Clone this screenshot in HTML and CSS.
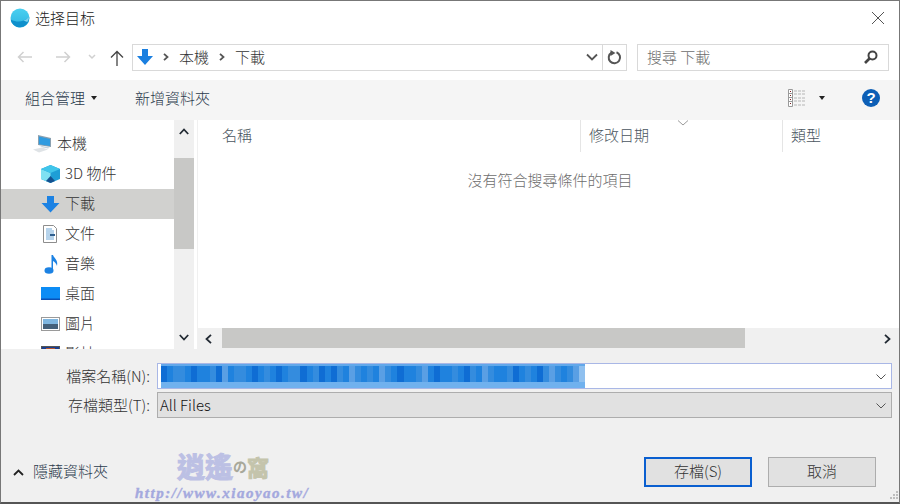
FILE: index.html
```html
<!DOCTYPE html>
<html lang="zh-Hant">
<head>
    <meta charset="UTF-8">
    <meta name="viewport" content="width=device-width, initial-scale=1.0">
    <title>选择目标</title>
    <link rel="stylesheet" href="styles.css">
</head>
<body>
    <div class="window">
        <header class="titlebar">
            <svg class="app-icon" width="20" height="20" viewBox="0 0 20 20">
                <defs>
                    <linearGradient id="ball" x1="0" y1="0" x2="0" y2="1">
                        <stop offset="0" stop-color="#4ad0f0"/>
                        <stop offset="1" stop-color="#2fb4e2"/>
                    </linearGradient>
                </defs>
                <circle cx="10" cy="10" r="9.5" fill="url(#ball)"/>
                <path d="M.7 11.500c5 2.500 9 2.500 13 1 2-.8 4-2 5.500-3.500.3 5.500-4 10.300-9.200 10.300-4.800 0-8.800-3.500-9.300-7.800z" fill="#0f90cc"/>
                <path d="M13.500 12.500c2-.5 4-2 5.500-3.500 0 2-.7 3.500-1.700 5z" fill="#7fd4ef"/>
            </svg>
            <span class="title-text">选择目标</span>
            <svg class="close-icon" width="14" height="14" viewBox="0 0 14 14">
                <path d="M1 1l12 12M13 1L1 13" stroke="#555" stroke-width="1" fill="none"/>
            </svg>
        </header>

        <nav class="navbar">
            <svg class="nav-back" width="16" height="12" viewBox="0 0 16 12">
                <path d="M15 6H1.500M6.500 1l-5 5 5 5" stroke="#d0d0d0" stroke-width="1.500" fill="none"/>
            </svg>
            <svg class="nav-forward" width="16" height="12" viewBox="0 0 16 12">
                <path d="M1 6h13.500M9.500 1l5 5-5 5" stroke="#d0d0d0" stroke-width="1.500" fill="none"/>
            </svg>
            <svg class="nav-recent" width="8" height="6" viewBox="0 0 8 6">
                <path d="M1 1l3 3 3-3" stroke="#d0d0d0" stroke-width="1.500" fill="none"/>
            </svg>
            <svg class="nav-up" width="14" height="16" viewBox="0 0 14 16">
                <path d="M7 16V1.500M1 7.500l6-6 6 6" stroke="#444" stroke-width="1.300" fill="none"/>
            </svg>
            <div class="address">
                <svg class="address-icon" width="16" height="18" viewBox="0 0 16 18">
                    <path d="M5 1h6v7h5l-8 9-8-9h5z" fill="#1a7fe0"/>
                </svg>
                <svg class="crumb-sep" width="6" height="8" viewBox="0 0 6 8">
                    <path d="M1 .8L4.500 4 1 7.200" stroke="#555" stroke-width="1.800" fill="none"/>
                </svg>
                <span class="crumb">本機</span>
                <svg class="crumb-sep" width="6" height="8" viewBox="0 0 6 8">
                    <path d="M1 .8L4.500 4 1 7.200" stroke="#555" stroke-width="1.800" fill="none"/>
                </svg>
                <span class="crumb">下載</span>
                <svg class="address-drop" width="12" height="8" viewBox="0 0 12 8">
                    <path d="M1 1.500l5 5 5-5" stroke="#555" stroke-width="1.800" fill="none"/>
                </svg>
                <span class="address-refresh">
                    <svg width="15" height="15" viewBox="0 0 15 15">
                        <path d="M9.500 2.300a5.700 5.700 0 1 1-5 .4" stroke="#555" stroke-width="2" fill="none"/>
                        <path d="M3.500 0v6L8.500 3z" fill="#555"/>
                    </svg>
                </span>
            </div>
            <div class="search">
                <span class="search-text">搜尋 下載</span>
                <svg width="14" height="14" viewBox="0 0 14 14">
                    <circle cx="8.500" cy="5.500" r="4" stroke="#444" stroke-width="2" fill="none"/>
                    <path d="M5.500 8.500L1 13" stroke="#444" stroke-width="2.600"/>
                </svg>
            </div>
        </nav>

        <div class="toolbar">
            <span class="tool">組合管理</span>
            <span class="caret"></span>
            <span class="tool tool-new">新增資料夾</span>
            <svg class="view-icon" width="18" height="18" viewBox="0 0 18 18">
                <path d="M.5.500h4v17h-4zM.5 4.500h4M.5 8.500h4M.5 12.500h4" stroke="#9a9a9a" fill="#fff"/>
                <path d="M6 2h12M6 5h12M6 9h12M6 12h12M6 16h12" stroke="#b5b5b5" stroke-dasharray="3 1"/>
                <path d="M2 2h1v1H2zM2 6h1v1H2zM2 10h1v1H2zM2 14h1v1H2z" fill="#7a2020"/>
            </svg>
            <span class="caret caret-view"></span>
            <span class="help">?</span>
        </div>

        <div class="browser">
            <aside class="sidebar">
                <ul class="tree">
                    <li class="tree-row tree-root">
                        <svg width="20" height="18" viewBox="0 0 20 18">
                            <path d="M6 0l13 3v9L6 10z" fill="#8aa0b0"/>
                            <path d="M7 1.500l11 2.500v7L7 9.300z" fill="#2f9be0"/>
                            <path d="M7 10.500l11 2-2 1-5-1z" fill="#c7d3dc"/>
                            <path d="M1 14.500l9-2 6 2-9 3z" fill="#dfe3e6"/>
                        </svg>
                        <span>本機</span>
                    </li>
                    <li class="tree-row">
                        <svg width="19" height="18" viewBox="0 0 19 18">
                            <path d="M9.500 0L19 4v10l-9.500 4L0 14V4z" fill="#1e9ed6"/>
                            <path d="M0 4l9.500 4v10L0 14z" fill="#7fe0f2"/>
                            <path d="M9.500 0L19 4 9.500 8 0 4z" fill="#40c5ea"/>
                            <path d="M5 16l4.500-5 4.500 5-4.500 2z" fill="#14508f"/>
                        </svg>
                        <span>3D 物件</span>
                    </li>
                    <li class="tree-row tree-selected">
                        <svg width="19" height="18" viewBox="0 0 19 18">
                            <path d="M6 1h7v7h5.500l-9 9.500-9-9.500H6z" fill="#1c82e3"/>
                        </svg>
                        <span>下載</span>
                    </li>
                    <li class="tree-row">
                        <svg width="19" height="18" viewBox="0 0 19 18">
                            <path d="M2.500.500h10l3 3v14h-13z" fill="#fff" stroke="#8d8d8d"/>
                            <path d="M5 4h6M5 6h8M5 8h8M5 10h8M5 12h8M5 14h8" stroke="#6fa8d8"/>
                            <path d="M9 9h5v2H9z" fill="#2f5f8f"/>
                        </svg>
                        <span>文件</span>
                    </li>
                    <li class="tree-row">
                        <svg width="19" height="19" viewBox="0 0 19 19">
                            <ellipse cx="8" cy="15.500" rx="4.500" ry="3.200" fill="#1c82e3"/>
                            <path d="M10.500 0h1.500c.5 3 5.500 4.500 4 11-.3-2-2.500-4.500-4-5V16h-1.500z" fill="#1c82e3"/>
                        </svg>
                        <span>音樂</span>
                    </li>
                    <li class="tree-row">
                        <svg width="19" height="18" viewBox="0 0 19 18">
                            <rect y="2" width="19" height="13" fill="#0c8cf5"/>
                            <rect y="13.500" width="19" height="1.500" fill="#0a4fb5"/>
                        </svg>
                        <span>桌面</span>
                    </li>
                    <li class="tree-row">
                        <svg width="19" height="18" viewBox="0 0 19 18">
                            <rect x=".5" y="2.500" width="18" height="13" fill="#fff" stroke="#9a9a9a"/>
                            <rect x="2" y="4" width="15" height="5" fill="#7fb6e0"/>
                            <rect x="2" y="9" width="15" height="5" fill="#44607a"/>
                        </svg>
                        <span>圖片</span>
                    </li>
                    <li class="tree-row">
                        <svg width="19" height="18" viewBox="0 0 19 18">
                            <rect x=".5" y="1.500" width="18" height="13" fill="#1a3f8f" stroke="#555"/>
                            <rect x="5" y="3" width="9" height="8" fill="#b5532a"/>
                        </svg>
                        <span>影片</span>
                    </li>
                </ul>
                <div class="v-scroll">
                    <svg class="arrow" width="10" height="7" viewBox="0 0 10 7">
                        <path d="M.8 6L5 1.500 9.200 6" stroke="#222a33" stroke-width="1.800" fill="none"/>
                    </svg>
                    <div class="v-track"><div class="v-thumb"></div></div>
                    <svg class="arrow" width="10" height="7" viewBox="0 0 10 7">
                        <path d="M.8 1L5 5.500 9.200 1" stroke="#222a33" stroke-width="1.800" fill="none"/>
                    </svg>
                </div>
            </aside>

            <main class="files">
                <div class="columns">
                    <div class="col col-name">名稱</div>
                    <div class="col col-date">修改日期
                        <svg class="sort-mark" width="12" height="6" viewBox="0 0 12 6">
                            <path d="M1 .5l5 4.500 5-4.500" stroke="#9a9a9a" fill="none"/>
                        </svg>
                    </div>
                    <div class="col col-type">類型</div>
                </div>
                <p class="empty">沒有符合搜尋條件的項目</p>
                <div class="h-scroll">
                    <svg width="7" height="10" viewBox="0 0 7 10">
                        <path d="M6 .8L1.500 5 6 9.200" stroke="#222a33" stroke-width="1.800" fill="none"/>
                    </svg>
                    <div class="h-track"><div class="h-thumb"></div></div>
                    <svg width="7" height="10" viewBox="0 0 7 10">
                        <path d="M1 .8L5.500 5 1 9.200" stroke="#222a33" stroke-width="1.800" fill="none"/>
                    </svg>
                </div>
            </main>
        </div>

        <footer class="bottom">
            <div class="fields">
                <label class="field-label">檔案名稱(N):</label>
                <div class="field field-name">
                    <div class="blur">
                        <i class="b"></i><i class="a"></i><i class="c"></i><i class="c"></i><i class="a"></i><i class="b"></i><i class="a"></i><i class="a"></i><i class="c"></i><i class="b"></i>
                        <i class="d"></i><i class="a"></i><i class="c"></i><i class="c"></i><i class="a"></i><i class="b"></i><i class="a"></i><i class="c"></i><i class="a"></i><i class="b"></i>
                        <i class="a"></i><i class="c"></i><i class="c"></i><i class="b"></i><i class="a"></i><i class="c"></i><i class="b"></i><i class="a"></i><i class="b"></i><i class="c"></i>
                        <i class="a"></i><i class="d"></i><i class="c"></i><i class="a"></i><i class="c"></i><i class="a"></i><i class="d"></i><i class="c"></i><i class="a"></i><i class="b"></i>
                        <i class="a"></i><i class="a"></i><i class="c"></i><i class="d"></i><i class="a"></i><i class="b"></i><i class="a"></i><i class="a"></i><i class="c"></i><i class="a"></i>
                        <i class="b"></i><i class="c"></i><i class="a"></i><i class="d"></i><i class="c"></i><i class="a"></i><i class="a"></i><i class="c"></i><i class="b"></i><i class="a"></i>
                        <i class="c"></i><i class="a"></i><i class="b"></i><i class="c"></i><i class="d"></i><i class="c"></i><i class="a"></i><i class="c"></i><i class="d"></i><i class="e"></i>
                    </div>
                    <svg class="field-drop" width="10" height="6" viewBox="0 0 10 6">
                        <path d="M.5.500L5 5 9.500.500" stroke="#555" fill="none"/>
                    </svg>
                </div>
                <label class="field-label">存檔類型(T):</label>
                <div class="field field-type">
                    <span>All Files</span>
                    <svg class="field-drop" width="10" height="6" viewBox="0 0 10 6">
                        <path d="M.5.500L5 5 9.500.500" stroke="#555" fill="none"/>
                    </svg>
                </div>
            </div>
            <div class="actions">
                <svg class="hide-arrow" width="11" height="7" viewBox="0 0 11 7">
                    <path d="M1 6l4.500-4.500L10 6" stroke="#222" stroke-width="1.800" fill="none"/>
                </svg>
                <span class="hide-text">隱藏資料夾</span>
                <button class="btn btn-default">存檔(S)</button>
                <button class="btn">取消</button>
            </div>
            <svg class="grip" width="12" height="12" viewBox="0 0 12 12">
                <path d="M9 1h2v2H9zM6 4h2v2H6zM9 4h2v2H9zM3 7h2v2H3zM6 7h2v2H6zM9 7h2v2H9z" fill="#bdbdbd"/>
            </svg>
        </footer>

        <div class="watermark">
            <div class="mark-name"><span class="mark-a">逍遙</span><span class="mark-b">の</span><span class="mark-c">窩</span></div>
            <div class="mark-url">http://www.xiaoyao.tw/</div>
        </div>
    </div>
</body>
</html>
```

FILE: styles.css
```css
* {
    box-sizing: border-box;
}
body {
    margin: 0;
    background-color: #fff;
    color: #333;
    font-family: "Noto Sans CJK TC", "Noto Sans", sans-serif;
    font-size: 15px;
    font-weight: 300;
    line-height: 20px;
}
svg {
    display: block;
    flex: none;
}
.window {
    position: relative;
    display: flex;
    flex-direction: column;
    width: 900px;
    height: 504px;
    overflow: hidden;
    border: 1px solid #777;
    border-bottom: 2px solid #555;
    background-color: #fff;
}

/* title bar */
.titlebar {
    display: flex;
    align-items: center;
    height: 37px;
    padding: 0 14px 3px 9px;
    flex: none;
}
.title-text {
    margin-left: 5px;
    color: #222;
}
.close-icon {
    margin-left: auto;
}

/* back, forward, address, search */
.navbar {
    display: flex;
    align-items: center;
    height: 42px;
    padding: 0 0 4px 16px;
    flex: none;
}
.nav-forward {
    margin-left: 22px;
}
.nav-recent {
    margin-left: 17px;
}
.nav-up {
    margin-left: 14px;
    margin-top: 2px;
}
.address {
    display: flex;
    align-items: center;
    width: 495px;
    height: 27px;
    margin-left: 8px;
    padding-left: 4px;
    border: 1px solid #d9d9d9;
}
.crumb-sep {
    margin-left: 10px;
}
.crumb {
    margin-left: 10px;
}
.address-drop {
    margin-left: auto;
}
.address-refresh {
    display: flex;
    align-items: center;
    justify-content: center;
    width: 24px;
    height: 100%;
    margin-left: 4px;
    border-left: 1px solid #d9d9d9;
}
.search {
    display: flex;
    align-items: center;
    justify-content: space-between;
    width: 252px;
    height: 27px;
    margin-left: 10px;
    padding: 0 10px 0 9px;
    border: 1px solid #d9d9d9;
}
.search-text {
    color: #6d6d6d;
}

/* toolbar */
.toolbar {
    display: flex;
    align-items: center;
    height: 40px;
    padding: 0 0 4px 24px;
    background-color: #f5f5f5;
    flex: none;
}
.tool {
    color: #2b3a4c;
}
.tool-new {
    margin-left: 38px;
}
.caret {
    width: 0;
    height: 0;
    margin-left: 6px;
    border: 3px solid transparent;
    border-top: 4px solid #222;
    border-bottom: 0;
}
.view-icon {
    margin-left: 578px;
}
.caret-view {
    margin-left: 13px;
}
.help {
    width: 18px;
    height: 18px;
    margin-left: 37px;
    border-radius: 50%;
    background-color: #0d5fb6;
    color: #fff;
    font-family: "Liberation Sans", sans-serif;
    font-size: 15px;
    font-weight: bold;
    line-height: 18px;
    text-align: center;
}

/* tree and file list */
.browser {
    display: flex;
    height: 229px;
    flex: none;
}
.sidebar {
    display: flex;
    width: 193px;
    flex: none;
}
.tree {
    width: 173px;
    height: 229px;
    margin: 0;
    padding: 9px 0 0;
    overflow: hidden;
    list-style-type: none;
}
.tree-row {
    display: flex;
    align-items: center;
    gap: 5px;
    height: 30px;
    padding-left: 40px;
}
.tree-row span {
    margin-bottom: 2px;
}
.tree-root {
    padding-left: 31px;
}
.tree-selected {
    background-color: #d1d1cf;
}
.v-scroll {
    display: flex;
    flex-direction: column;
    align-items: center;
    width: 20px;
    background-color: #f0f0f0;
    padding: 8px 0 8px;
}
.v-track {
    align-self: stretch;
    flex: 1;
    padding-top: 23px;
}
.v-thumb {
    height: 91px;
    background-color: #c8c8c6;
}
.files {
    position: relative;
    display: flex;
    flex-direction: column;
    flex: 1;
    margin-left: 3px;
    border-left: 1px solid #f0f0f0;
    min-width: 0;
}
.columns {
    display: flex;
    height: 32px;
    color: #4a5560;
    flex: none;
}
.col {
    display: flex;
    align-items: center;
    padding: 0 0 2px 8px;
    border-left: 1px solid #e5e5e5;
}
.col-name {
    width: 382px;
    padding-left: 24px;
    border-left: 0;
}
.col-date {
    position: relative;
    width: 202px;
}
.col-type {
    flex: 1;
}
.sort-mark {
    position: absolute;
    top: 0;
    left: 96px;
}
.empty {
    flex: 1;
    margin: 0;
    padding: 18px 0 0 3px;
    color: #6d6d6d;
    text-align: center;
}
.h-scroll {
    display: flex;
    align-items: center;
    height: 21px;
    padding: 0 8px 0 7px;
    background-color: #f0f0f0;
    flex: none;
}
.h-track {
    flex: 1;
    height: 20px;
    align-self: flex-start;
    padding-left: 10px;
}
.h-thumb {
    width: 523px;
    height: 20px;
    background-color: #c8c8c6;
}

/* name, type and buttons */
.bottom {
    position: relative;
    display: flex;
    flex-direction: column;
    flex: 1;
    background-color: #f0f0f0;
}
.fields {
    display: grid;
    grid-template-columns: 149px 735px;
    column-gap: 7px;
    row-gap: 3px;
    align-items: center;
    padding-top: 14px;
}
.field-label {
    text-align: right;
}
.field {
    position: relative;
    display: flex;
    align-items: center;
    height: 26px;
    padding-left: 2px;
}
.field-name {
    border: 1px solid #a9b7e6;
    background-color: #fff;
}
.field-type {
    border: 1px solid #adadad;
    background-color: #e1e1e1;
    color: #111;
}
.field-drop {
    position: absolute;
    top: 10px;
    right: 5px;
}
.blur {
    display: flex;
    width: 424px;
    height: 24px;
    margin-left: 1px;
    border-bottom: 6px solid #70b1ee;
    border-top: 2px solid #62a8ea;
}
.blur i {
    flex: 1;
}
.blur .a {
    background-color: #1f82de;
}
.blur .b {
    background-color: #0f6dd4;
}
.blur .c {
    background-color: #348cde;
}
.blur .d {
    background-color: #5a9fe4;
}
.blur .e {
    background-color: #8fc0ef;
}
.actions {
    display: flex;
    align-items: center;
    margin-top: 39px;
    padding-left: 12px;
}
.hide-text {
    margin: 0 0 2px 9px;
    color: #2b3a4c;
}
.btn {
    width: 108px;
    height: 30px;
    padding: 0 0 2px;
    border: 1px solid #adadad;
    background-color: #e1e1e1;
    color: #333;
    font: inherit;
}
.btn-default {
    margin-left: auto;
    border: 2px solid #0a5fd0;
}
.btn + .btn {
    margin-left: 16px;
    margin-right: 23px;
}
.grip {
    position: absolute;
    right: 0;
    bottom: 0;
}

/* watermark sits over the bottom bar */
.watermark {
    position: absolute;
    left: 134px;
    top: 445px;
    width: 176px;
    pointer-events: none;
}
.mark-name {
    display: flex;
    align-items: center;
    height: 40px;
    padding-left: 42px;
    font-weight: bold;
}
.mark-a {
    color: #bcc0e4;
    font-size: 28px;
    -webkit-text-stroke: 1px #bcc0e4;
}
.mark-b {
    color: #a8a89a;
    font-size: 14px;
}
.mark-c {
    color: #c4c4ac;
    font-size: 22px;
    -webkit-text-stroke: 1px #c4c4ac;
}
.mark-url {
    color: #a4a9de;
    font-family: "Liberation Serif", serif;
    font-size: 15px;
    font-weight: bold;
    font-style: italic;
    letter-spacing: 1.5px;
    line-height: 14px;
    white-space: nowrap;
    -webkit-text-stroke: .4px #a4a9de;
}
```
